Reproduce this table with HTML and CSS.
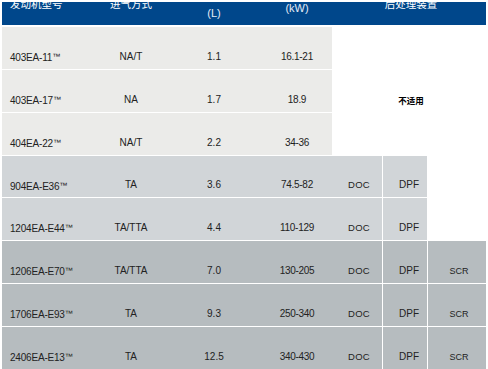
FILE: index.html
```html
<!DOCTYPE html>
<html lang="zh">
<head>
<meta charset="utf-8">
<title>发动机型号</title>
<link rel="stylesheet" href="styles.css">
</head>
<body>
<div class="page">
  <div class="head">
    <div class="h h-model"><span>发动机型号</span></div>
    <div class="h h-intake"><span>进气方式</span></div>
    <div class="h h-disp"><span>(L)</span></div>
    <div class="h h-power"><span>(kW)</span></div>
    <div class="h h-after"><span>后处理装置</span></div>
  </div>
  <div class="grid">
    <div class="c light model">403EA-11<span class="tm">™</span></div>
    <div class="c light">NA/T</div>
    <div class="c light">1.1</div>
    <div class="c light power">16.1-21</div>
    <div class="na">不适用</div>

    <div class="c light model">403EA-17<span class="tm">™</span></div>
    <div class="c light">NA</div>
    <div class="c light">1.7</div>
    <div class="c light power">18.9</div>

    <div class="c light model">404EA-22<span class="tm">™</span></div>
    <div class="c light">NA/T</div>
    <div class="c light">2.2</div>
    <div class="c light power">34-36</div>

    <div class="c mid model">904EA-E36<span class="tm">™</span></div>
    <div class="c mid">TA</div>
    <div class="c mid">3.6</div>
    <div class="c mid power">74.5-82</div>
    <div class="c mid doc">DOC</div>
    <div class="c mid dpf">DPF</div>
    <div class="blank"></div>

    <div class="c mid model">1204EA-E44<span class="tm">™</span></div>
    <div class="c mid">TA/TTA</div>
    <div class="c mid">4.4</div>
    <div class="c mid power">110-129</div>
    <div class="c mid doc">DOC</div>
    <div class="c mid dpf">DPF</div>
    <div class="blank"></div>

    <div class="c dark model">1206EA-E70<span class="tm">™</span></div>
    <div class="c dark">TA/TTA</div>
    <div class="c dark">7.0</div>
    <div class="c dark power">130-205</div>
    <div class="c dark doc">DOC</div>
    <div class="c dark dpf">DPF</div>
    <div class="c dark scr">SCR</div>

    <div class="c dark model">1706EA-E93<span class="tm">™</span></div>
    <div class="c dark">TA</div>
    <div class="c dark">9.3</div>
    <div class="c dark power">250-340</div>
    <div class="c dark doc">DOC</div>
    <div class="c dark dpf">DPF</div>
    <div class="c dark scr">SCR</div>

    <div class="c dark model">2406EA-E13<span class="tm">™</span></div>
    <div class="c dark">TA</div>
    <div class="c dark">12.5</div>
    <div class="c dark power">340-430</div>
    <div class="c dark doc">DOC</div>
    <div class="c dark dpf">DPF</div>
    <div class="c dark scr">SCR</div>
  </div>
</div>
</body>
</html>
```

FILE: styles.css
```css
html, body {
  margin: 0;
  padding: 0;
  background: #ffffff;
}

body {
  font-family: "Liberation Sans", Arial, sans-serif;
  color: #222222;
  overflow: hidden;
}

.page {
  padding: 2px 0 0 2px;
  width: 484px;
}

.head {
  display: grid;
  grid-template-columns: 88px 82px 84px 76px 154px;
  height: 23px;
  background: #00478b;
  overflow: hidden;
  margin-bottom: 2px;
}

.h {
  display: flex;
  justify-content: center;
  align-items: flex-start;
  color: #ffffff;
  font-family: "Noto Sans CJK SC", "Liberation Sans", sans-serif;
  font-size: 10.5px;
  line-height: 12px;
  white-space: nowrap;
}

.h span {
  display: block;
  margin-top: -4px;
}

.h-model {
  justify-content: flex-start;
  padding-left: 8px;
}

.h-disp,
.h-power {
  font-family: "Liberation Sans", Arial, sans-serif;
  font-size: 11px;
  color: #e4ecf6;
}

.h-disp span {
  margin-top: 5px;
}

.h-power span {
  margin-top: 0;
  padding-left: 6px;
}

.h-after {
  padding-left: 4px;
}

.grid {
  display: grid;
  grid-template-columns: 88px 82px 84px 76px 50px 45px 59px;
  grid-auto-rows: 41.857px;
  row-gap: 1px;
}

.c {
  display: flex;
  align-items: flex-end;
  justify-content: center;
  padding-bottom: 6px;
  font-size: 10px;
  line-height: 12px;
  white-space: nowrap;
  box-sizing: border-box;
}

.light { background: #ebebe9; }
.mid { background: #d1d5d8; }
.dark { background: #b6bcbf; }

.model {
  display: block;
  padding: 24px 0 0 8px;
  letter-spacing: -0.2px;
}

.tm {
  font-size: 8px;
  vertical-align: 2px;
  letter-spacing: 0;
}

.power {
  padding-left: 6px;
  letter-spacing: -0.3px;
}

.doc {
  padding-left: 4px;
  font-size: 9.5px;
  letter-spacing: 0.3px;
}

.dpf {
  border-left: 1px solid #ffffff;
  padding-left: 8px;
}

.scr {
  border-left: 1px solid #ffffff;
  padding-left: 4px;
  font-size: 9px;
}

.blank {
  background: #ffffff;
}

.na {
  grid-column: 5 / span 3;
  grid-row: 1 / span 3;
  background: #ffffff;
  display: flex;
  align-items: center;
  justify-content: center;
  padding: 18px 0 0 4px;
  font-family: "Noto Sans CJK SC", sans-serif;
  font-size: 8.5px;
  font-weight: 700;
  color: #000000;
}
```
